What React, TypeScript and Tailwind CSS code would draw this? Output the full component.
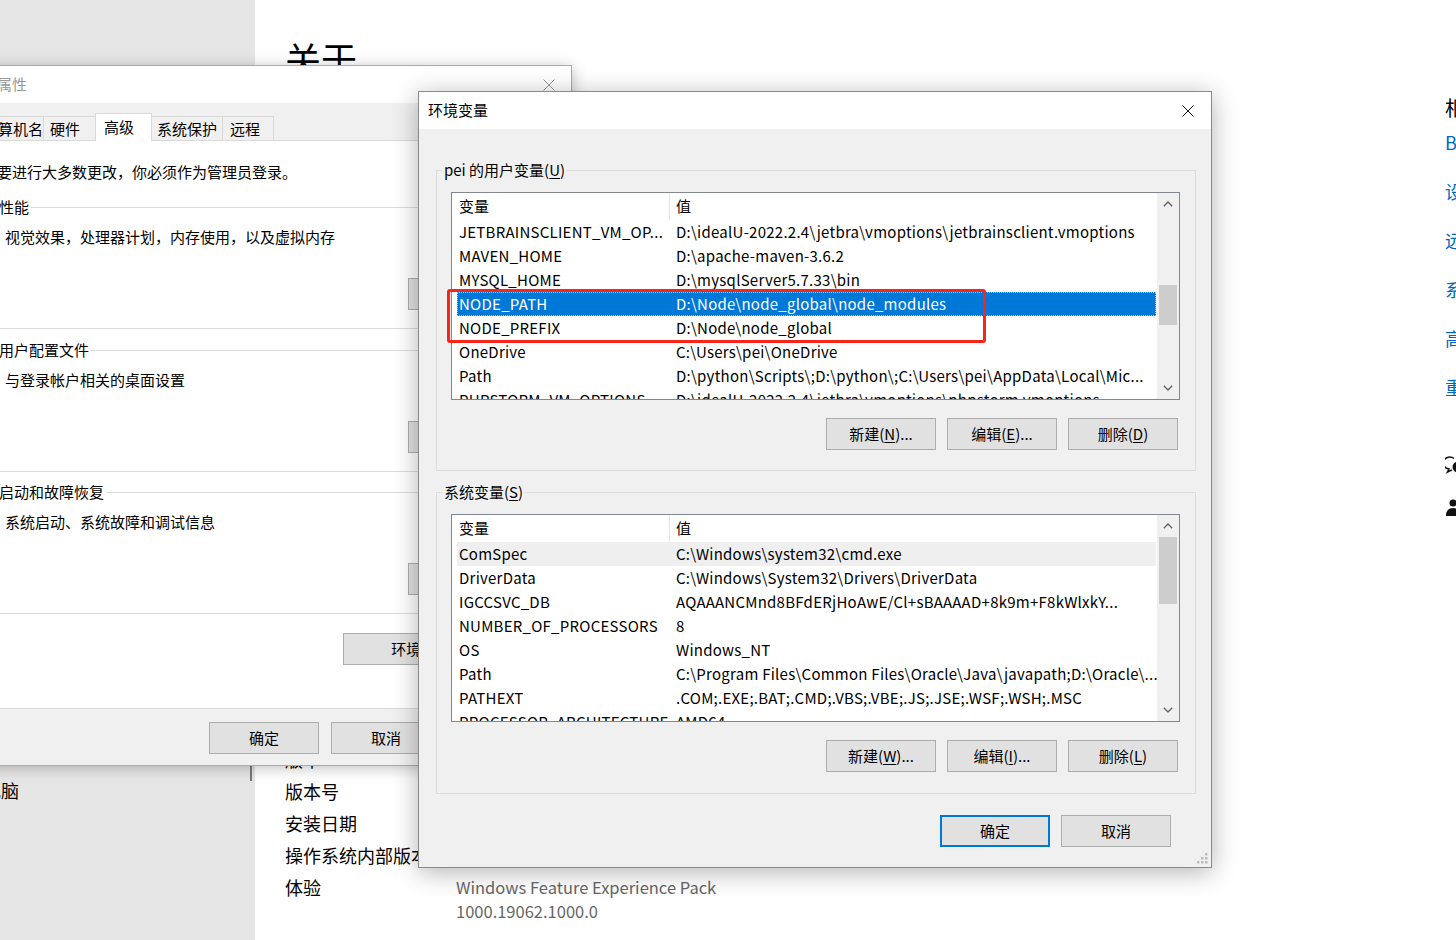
import React from 'react'

type Row = [string, string]

const userVars: Row[] = [
    ['JETBRAINSCLIENT_VM_OP...', 'D:\\idealU-2022.2.4\\jetbra\\vmoptions\\jetbrainsclient.vmoptions'],
    ['MAVEN_HOME', 'D:\\apache-maven-3.6.2'],
    ['MYSQL_HOME', 'D:\\mysqlServer5.7.33\\bin'],
    ['NODE_PATH', 'D:\\Node\\node_global\\node_modules'],
    ['NODE_PREFIX', 'D:\\Node\\node_global'],
    ['OneDrive', 'C:\\Users\\pei\\OneDrive'],
    ['Path', 'D:\\python\\Scripts\\;D:\\python\\;C:\\Users\\pei\\AppData\\Local\\Mic...'],
    ['PHPSTORM_VM_OPTIONS', 'D:\\idealU-2022.2.4\\jetbra\\vmoptions\\phpstorm.vmoptions'],
]

const systemVars: Row[] = [
    ['ComSpec', 'C:\\Windows\\system32\\cmd.exe'],
    ['DriverData', 'C:\\Windows\\System32\\Drivers\\DriverData'],
    ['IGCCSVC_DB', 'AQAAANCMnd8BFdERjHoAwE/Cl+sBAAAAD+8k9m+F8kWlxkY...'],
    ['NUMBER_OF_PROCESSORS', '8'],
    ['OS', 'Windows_NT'],
    ['Path', 'C:\\Program Files\\Common Files\\Oracle\\Java\\javapath;D:\\Oracle\\...'],
    ['PATHEXT', '.COM;.EXE;.BAT;.CMD;.VBS;.VBE;.JS;.JSE;.WSF;.WSH;.MSC'],
    ['PROCESSOR_ARCHITECTURE', 'AMD64'],
]

const specs: [string, React.ReactNode][] = [
    ['版本', 'Windows 10 专业版'],
    ['版本号', '21H2'],
    ['安装日期', '2022/11/3'],
    ['操作系统内部版本', '19044.2251'],
    ['体验', <>Windows Feature Experience Pack<br />1000.19062.1000.0</>],
]

const relatedLinks = ['BitLocker 设置', '设备管理器', '远程桌面', '系统保护', '高级系统设置', '重命名这台电脑']

function Mn({ k }: { k: string }) {
    return <span className="underline underline-offset-[2px]">{k}</span>
}

function Btn({ children, primary, className = 'w-[110px]' }: { children: React.ReactNode; primary?: boolean; className?: string }) {
    return (
        <div
            className={
                'h-[32px] shrink-0 flex items-center justify-center bg-[#e1e1e1] whitespace-nowrap ' +
                (primary ? 'border-2 border-[#0078d7] ' : 'border border-[#adadad] ') +
                className
            }
        >
            {children}
        </div>
    )
}

function CloseX({ color }: { color: string }) {
    return (
        <svg width="12" height="12" viewBox="0 0 12 12">
            <path d="M0.5 0.5 L11.5 11.5 M11.5 0.5 L0.5 11.5" stroke={color} strokeWidth="1" fill="none" />
        </svg>
    )
}

function Chevron({ up }: { up?: boolean }) {
    return (
        <svg width="10" height="6" viewBox="0 0 10 6">
            <path d={up ? 'M0.8 5.2 L5 1 L9.2 5.2' : 'M0.8 0.8 L5 5 L9.2 0.8'} stroke="#606060" strokeWidth="1.3" fill="none" />
        </svg>
    )
}

function VarList({ rows, selected, hovered, thumb }: { rows: Row[]; selected?: number; hovered?: number; thumb: string }) {
    return (
        <div className="h-[208px] flex border border-[#828790] bg-white">
            <div className="flex-1 min-w-0 overflow-hidden">
                {/* header */}
                <div className="h-[27px] flex items-center">
                    <div className="w-[218px] h-full pl-[7px] flex items-center border-r border-[#e5e5e5]">变量</div>
                    <div className="pl-[6px]">值</div>
                </div>
                <div className="pl-[5px] pr-[1px] tracking-[0.25px]">
                    {rows.map((r, i) => (
                        <div
                            key={r[0]}
                            className={
                                'h-[24px] flex items-center whitespace-nowrap ' +
                                (i === selected
                                    ? 'bg-[#0078d7] text-white outline-1 outline-dotted outline-[#e8b96a] -outline-offset-1'
                                    : i === hovered
                                      ? 'bg-[#efefef]'
                                      : '')
                            }
                        >
                            <div className="w-[217px] shrink-0 pl-[2px] overflow-hidden">{r[0]}</div>
                            <div className="pl-[2px]">{r[1]}</div>
                        </div>
                    ))}
                </div>
            </div>
            {/* scrollbar */}
            <div className="w-[22px] shrink-0 flex flex-col bg-[#f0f0f0]">
                <div className="h-[22px] flex items-center justify-center">
                    <Chevron up />
                </div>
                <div className="flex-1 px-[2px]">
                    <div className={'bg-[#cdcdcd] ' + thumb} />
                </div>
                <div className="h-[22px] flex items-center justify-center">
                    <Chevron />
                </div>
            </div>
        </div>
    )
}

function SettingsPage() {
    return (
        <div className="flex h-full">
            {/* left nav */}
            <aside className="relative w-[255px] shrink-0 bg-[#e6e6e6] pt-[778px]">
                <div className="-ml-[89px] text-[18px] leading-[24px] whitespace-nowrap">投影到此电脑</div>
                <div className="absolute right-[3px] top-[700px] h-[81px] w-[2px] bg-[#7a7a7a]" />
            </aside>

            <main className="flex flex-1">
                <div className="w-[1190px] shrink-0 pl-[30px] pt-[36px]">
                    <h1 className="text-[36px] leading-[44px]">关于</h1>
                    <div className="mt-[667px] grid grid-cols-[171px_1fr] gap-y-[8px] text-[18px] leading-[24px]">
                        {specs.map(([k, v]) => (
                            <React.Fragment key={k}>
                                <div className="whitespace-nowrap">{k}</div>
                                <div className="text-[16.5px] text-[#666666]">{v}</div>
                            </React.Fragment>
                        ))}
                    </div>
                </div>

                {/* related settings */}
                <div className="shrink-0 w-[300px] pt-[96px] whitespace-nowrap">
                    <div className="text-[20px] leading-[24px]">相关设置</div>
                    <div className="mt-[10px] flex flex-col gap-[25px] text-[18px] leading-[24px] text-[#0067c0]">
                        {relatedLinks.map((l) => (
                            <div key={l}>{l}</div>
                        ))}
                    </div>
                    <div className="mt-[56px] flex flex-col gap-[17px] text-[18px] leading-[24px] text-[#0067c0]">
                        <div className="flex items-center gap-[14px]">
                            <svg width="22" height="22" viewBox="0 0 22 22">
                                <path d="M9 2.5 a6.5 6 0 1 0 -5 10.5 l-1.5 3 l4.5 -2.2" stroke="#111" strokeWidth="1.5" fill="none" />
                                <ellipse cx="13.5" cy="11" rx="6" ry="5.5" fill="#111" />
                                <path d="M16.5 15 l2.5 4 l-5 -2.5 z" fill="#111" />
                            </svg>
                            <span>获取帮助</span>
                        </div>
                        <div className="flex items-center gap-[14px]">
                            <svg width="22" height="22" viewBox="0 0 22 22">
                                <circle cx="8" cy="6" r="3.5" fill="#111" />
                                <path d="M1 19 q0 -8 7 -8 q7 0 7 8 z" fill="#111" />
                                <path d="M15 5 h6 v5 h-4 l-2 2 z" fill="#111" />
                            </svg>
                            <span>提供反馈</span>
                        </div>
                    </div>
                </div>
            </main>
        </div>
    )
}

function SystemProperties() {
    return (
        <div className="absolute left-[-44px] top-[65px] w-[616px] h-[701px] flex flex-col bg-[#f0f0f0] border border-[#aaaaaa] shadow-[0_2px_14px_rgba(0,0,0,0.25)] text-[15px]">
            {/* Title */}
            <div className="h-[37px] shrink-0 flex items-center justify-between bg-white pl-[10px]">
                <span className="text-[#999999]">系统属性</span>
                <div className="w-[44px] flex justify-center">
                    <CloseX color="#9a9a9a" />
                </div>
            </div>

            {/* Tabs */}
            <div className="mt-[10px] h-[27px] flex items-end pl-[19px] whitespace-nowrap">
                <div className="w-[67px] h-[24px] pl-[6px] leading-[23px] border-t border-l border-[#d9d9d9]">计算机名</div>
                <div className="w-[52px] h-[24px] pl-[6px] leading-[23px] border-t border-l border-[#d9d9d9]">硬件</div>
                <div className="relative z-10 w-[57px] h-[28px] -mb-px pl-[8px] leading-[25px] bg-white border-t border-l border-r border-[#d9d9d9]">
                    高级
                </div>
                <div className="w-[70px] h-[24px] pl-[5px] leading-[23px] border-t border-[#d9d9d9]">系统保护</div>
                <div className="w-[52px] h-[24px] pl-[7px] leading-[23px] border-t border-l border-r border-[#d9d9d9]">远程</div>
            </div>

            {/* Tab panel */}
            <div className="ml-[19px] mr-[8px] h-[569px] shrink-0 bg-white border border-[#d9d9d9] pt-[21px] px-[12px]">
                <div className="ml-[8px] leading-[20px] whitespace-nowrap">要进行大多数更改，你必须作为管理员登录。</div>

                {[
                    { t: '性能', d: '视觉效果，处理器计划，内存使用，以及虚拟内存', mt: 'mt-[15px]' },
                    { t: '用户配置文件', d: '与登录帐户相关的桌面设置', mt: 'mt-[11px]' },
                    { t: '启动和故障恢复', d: '系统启动、系统故障和调试信息', mt: 'mt-[10px]' },
                ].map((g) => (
                    <fieldset key={g.t} className={'min-w-0 border border-[#dcdcdc] pl-[7px] pr-[31px] pb-[18px] ' + g.mt}>
                        <legend className="px-[2px] leading-[20px]">{g.t}</legend>
                        <div className="pl-[8px]">
                            <div className="mt-[10px] leading-[20px] whitespace-nowrap">{g.d}</div>
                            <div className="mt-[31px] flex justify-end">
                                <Btn>
                                    设置(<Mn k="S" />)...
                                </Btn>
                            </div>
                        </div>
                    </fieldset>
                ))}

                <div className="mt-[19px] flex justify-end pr-[17px]">
                    <Btn className="w-[190px]">
                        环境变量(<Mn k="N" />)...
                    </Btn>
                </div>
            </div>

            {/* Bottom buttons */}
            <div className="mt-[13px] flex justify-end gap-[12px] pr-[8px]">
                <Btn>确定</Btn>
                <Btn>取消</Btn>
                <Btn>
                    应用(<Mn k="A" />)
                </Btn>
            </div>
        </div>
    )
}

function EnvDialog() {
    return (
        <div className="absolute left-[418px] top-[91px] w-[794px] h-[777px] flex flex-col bg-[#f0f0f0] border border-[#8a8a8a] shadow-[0_4px_24px_rgba(0,0,0,0.3)] text-[15px]">
            {/* Title */}
            <div className="h-[37px] shrink-0 flex items-center justify-between bg-white pl-[9px]">
                <span>环境变量</span>
                <div className="w-[46px] flex justify-center">
                    <CloseX color="#111111" />
                </div>
            </div>

            <div className="pl-[17px] pr-[15px] pt-[31px]">
                {/* User variables */}
                <fieldset className="min-w-0 border border-[#dcdcdc] pl-[5px] pr-[15px] pb-[20px]">
                    <legend className="px-[2px] leading-[20px]">
                        pei 的用户变量(<Mn k="U" />)
                    </legend>
                    <div className="pl-[9px]">
                        <div className="mt-[12px]">
                            <VarList rows={userVars} selected={3} thumb="mt-[70px] h-[40px]" />
                        </div>
                        <div className="mt-[18px] flex justify-end gap-[11px] pr-[2px]">
                            <Btn>
                                新建(<Mn k="N" />)...
                            </Btn>
                            <Btn>
                                编辑(<Mn k="E" />)...
                            </Btn>
                            <Btn>
                                删除(<Mn k="D" />)
                            </Btn>
                        </div>
                    </div>
                </fieldset>

                {/* System variables */}
                <fieldset className="min-w-0 mt-[11px] border border-[#dcdcdc] pl-[5px] pr-[15px] pb-[21px]">
                    <legend className="px-[2px] leading-[20px]">
                        系统变量(<Mn k="S" />)
                    </legend>
                    <div className="pl-[9px]">
                        <div className="mt-[12px]">
                            <VarList rows={systemVars} hovered={0} thumb="h-[67px]" />
                        </div>
                        <div className="mt-[18px] flex justify-end gap-[11px] pr-[2px]">
                            <Btn>
                                新建(<Mn k="W" />)...
                            </Btn>
                            <Btn>
                                编辑(<Mn k="I" />)...
                            </Btn>
                            <Btn>
                                删除(<Mn k="L" />)
                            </Btn>
                        </div>
                    </div>
                </fieldset>

                <div className="mt-[21px] mr-[25px] flex justify-end gap-[11px]">
                    <Btn primary>确定</Btn>
                    <Btn>取消</Btn>
                </div>
            </div>

            {/* resize grip */}
            <svg className="absolute right-[3px] bottom-[3px]" width="11" height="11" viewBox="0 0 11 11">
                {[
                    [8, 0],
                    [4, 4],
                    [8, 4],
                    [0, 8],
                    [4, 8],
                    [8, 8],
                ].map(([x, y]) => (
                    <rect key={x + '-' + y} x={x} y={y} width="2.5" height="2.5" fill="#bdbdbd" />
                ))}
            </svg>
        </div>
    )
}

export default function App() {
    return (
        <div className="relative w-[1456px] h-[940px] overflow-hidden bg-white text-black font-['Noto_Sans_CJK_SC','Noto_Sans',sans-serif]">
            <SettingsPage />
            <SystemProperties />
            <EnvDialog />
            {/* 红框标注 */}
            <div className="absolute left-[447px] top-[289px] w-[539px] h-[54px] border-[3px] border-[#fa2418] rounded-[3px]" />
        </div>
    )
}
